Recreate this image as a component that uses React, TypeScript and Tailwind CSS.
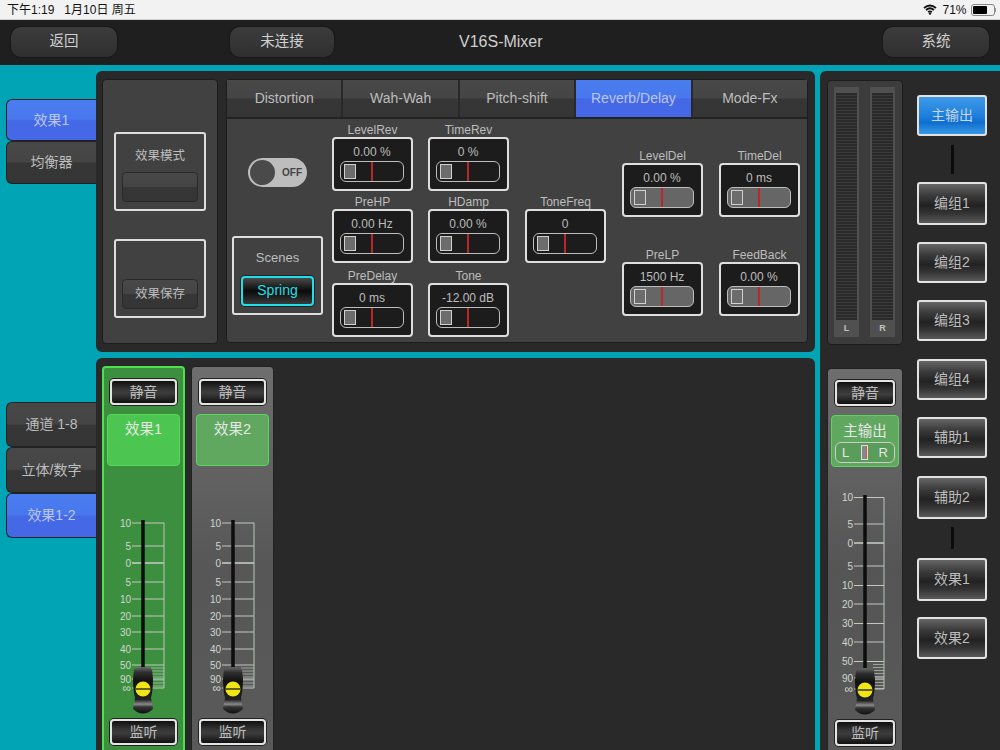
import React from 'react';

const FONT = '"Liberation Sans", "Noto Sans CJK SC", sans-serif';

const gloss = 'bg-[linear-gradient(#484848_0%,#454545_48%,#363636_52%,#353535_100%)]';
const blueGloss = 'bg-[linear-gradient(#4a7def_0%,#4877ee_48%,#4468e6_52%,#4468e6_100%)]';
const darkBtn = 'bg-[linear-gradient(#0f0f0f_0%,#333_35%,#3d3d3d_55%,#111_100%)]';
const sideBtn = 'bg-[linear-gradient(#666_0%,#3a3a3a_30%,#222_55%,#333_75%,#5a5a5a_100%)]';

function SideTab({ label, active, h }: { label: string; active?: boolean; h: number }) {
  return (
    <div
      style={{ height: h }}
      className={`flex items-center justify-center rounded-l-[6px] border border-r-0 border-[#222] text-[14px] ${active ? blueGloss + ' text-[#bcc6ee]' : gloss + ' text-[#bdbdbd]'}`}
    >
      {label}
    </div>
  );
}

function TopButton({ label, w }: { label: string; w: number }) {
  return (
    <div
      style={{ width: w }}
      className="flex h-[30px] items-center justify-center rounded-[10px] bg-[linear-gradient(#3c3c3c,#2f2f2f)] text-[14.5px] text-[#cfcfcf] ring-1 ring-[#191919]"
    >
      {label}
    </div>
  );
}

function Param({ label, value, light, mt = 0 }: { label: string; value: string; light?: boolean; mt?: number }) {
  return (
    <div style={{ marginTop: mt }} className="w-[81px]">
      <div className="h-[13px] text-center text-[12px] leading-[13px] text-[#bdbdbd]">{label}</div>
      <div className="h-[54px] rounded-[4px] border-2 border-[#dedede] bg-[#1c1c1c] pl-[6px] pr-[7px] pt-[5px]">
        <div className="h-[16px] text-center text-[12px] leading-[16px] text-[#bdbdbd]">{value}</div>
        <div className={`relative mt-[1px] h-[21px] rounded-[6px] border-[1.5px] border-[#bdbdbd] py-[1.5px] pl-[3px] ${light ? 'bg-[#666]' : 'bg-[#1c1c1c]'}`}>
          <div className="h-[15px] w-[12px] border border-[#d0d0d0] bg-[#6c6c6c]" />
          <div className="absolute left-[30px] top-0 h-full w-[2px] bg-[#b82828]" />
        </div>
      </div>
    </div>
  );
}

function MixButton({ label, w }: { label: string; w: number }) {
  return (
    <div
      style={{ width: w }}
      className={`flex h-[26px] items-center justify-center rounded-[4px] border-2 border-[#e4e4e4] text-[14px] text-[#bdbdbd] ring-1 ring-[#222] ${darkBtn}`}
    >
      {label}
    </div>
  );
}

function RouteButton({ label, mt, h = 41 }: { label: string; mt: number; h?: number }) {
  return (
    <div
      style={{ height: h, marginTop: mt }}
      className={`flex w-[70px] items-center justify-center rounded-[3px] border-2 border-[#e2e2e2] text-[14px] text-[#bdbdbd] ${sideBtn}`}
    >
      {label}
    </div>
  );
}

function Fader({ id, width, height, track, right, top, knobTop, ticks }: { id: string; width: number; height: number; track: number; right: number; top: number; knobTop: number; ticks: [string, number][] }) {
  const bottom = ticks[ticks.length - 1][1];
  const fifty = ticks[ticks.length - 3][1];
  const fine: number[] = [];
  for (let y = fifty + 3; y < bottom; y += 3) fine.push(y);
  return (
    <svg width={width} height={height} className="block">
      <defs>
        <linearGradient id={id} x1="0" y1="0" x2="0" y2="1">
          <stop offset="0" stopColor="#6a6a6a" />
          <stop offset="0.12" stopColor="#2e2e2e" />
          <stop offset="0.3" stopColor="#111" />
          <stop offset="0.7" stopColor="#222" />
          <stop offset="0.8" stopColor="#8a8a8a" />
          <stop offset="0.86" stopColor="#333" />
          <stop offset="1" stopColor="#111" />
        </linearGradient>
      </defs>
      <line x1={right} y1={ticks[0][1]} x2={right} y2={bottom} stroke="#b9c4b9" strokeWidth="1" />
      {fine.map((y) => (
        <line key={y} x1={track + 8} y1={y} x2={right} y2={y} stroke="#b9c4b9" strokeWidth="0.7" />
      ))}
      {ticks.map(([t, y], i) => (
        <g key={i}>
          <line x1={track - 11} y1={y} x2={right} y2={y} stroke="#c0c8c0" strokeWidth={t === '0' ? 1.6 : 1} />
          <text x={track - 12} y={y + 3.5} textAnchor="end" fontSize={t === '∞' ? 12 : 10} fill="#cfd6cf" fontFamily={FONT}>{t}</text>
        </g>
      ))}
      <rect x={track - 1.75} y={top} width="3.5" height={knobTop - top + 4} fill="#0d0d0d" />
      <path
        d={`M${track - 9},${knobTop + 2} Q${track},${knobTop - 2} ${track + 9},${knobTop + 2} L${track + 10},${knobTop + 12} Q${track + 10},${knobTop + 23} ${track + 8},${knobTop + 31} L${track + 10},${knobTop + 42} Q${track},${knobTop + 51} ${track - 10},${knobTop + 42} L${track - 8},${knobTop + 31} Q${track - 10},${knobTop + 23} ${track - 10},${knobTop + 12} Z`}
        fill={`url(#${id})`}
      />
      <circle cx={track} cy={knobTop + 22} r="7.5" fill="#f0e616" />
      <line x1={track - 7.5} y1={knobTop + 22} x2={track + 7.5} y2={knobTop + 22} stroke="#1a1a1a" strokeWidth="1.3" />
    </svg>
  );
}

const stripTicks: [string, number][] = [['10', 8], ['5', 31], ['0', 48], ['5', 67], ['10', 84], ['20', 101], ['30', 117], ['40', 134], ['50', 150], ['90', 164], ['∞', 173]];
const masterTicks: [string, number][] = [['10', 7.5], ['5', 34], ['0', 53], ['5', 76], ['10', 95.5], ['20', 114], ['30', 133.5], ['40', 152], ['50', 171.5], ['90', 188], ['∞', 199]];

function Strip({ name, selected, id }: { name: string; selected?: boolean; id: string }) {
  return (
    <div className={`flex h-[400px] w-[83px] flex-col items-center rounded-[4px] border ${selected ? 'border-2 border-[#4fe050] bg-[#3d8f40] pt-[11px]' : 'border-[#222] bg-[linear-gradient(#6e6e6e,#575757_50%,#5a5a5a)] pt-[12px]'}`}>
      <MixButton label="静音" w={67} />
      <div className={`mt-[9px] h-[52px] w-[73px] rounded-[4px] border border-[#58d85a] pt-[4px] text-center text-[14.5px] text-[#e6e6e6] ${selected ? 'bg-[#4cc650]' : 'bg-[#60a860]'}`}>
        {name}
      </div>
      <div className="mt-[49px] self-start">
        <Fader id={id} width={79} height={204} track={selected ? 39 : 41} right={selected ? 60 : 62} top={5} knobTop={152} ticks={stripTicks} />
      </div>
      <MixButton label="监听" w={67} />
    </div>
  );
}

export default function App() {
  return (
    <div className="flex h-[750px] w-[1000px] flex-col overflow-hidden" style={{ fontFamily: FONT }}>
      {/* status bar */}
      <div className="flex h-[20px] items-center border-b border-[#cfcfcf] bg-[#f2f2f2] pl-[7px] pr-[4px] text-[12px] text-[#111]">
        <span>下午1:19</span>
        <span className="ml-[10px]">1月10日 周五</span>
        <svg width="14" height="11" viewBox="0 0 14 11" className="ml-auto">
          <path d="M1,4 Q7,-1 13,4 M3,6 Q7,2.5 11,6 M5,8 Q7,6.5 9,8" fill="none" stroke="#111" strokeWidth="1.7" />
          <circle cx="7" cy="9.5" r="1.2" fill="#111" />
        </svg>
        <span className="ml-[5px]">71%</span>
        <div className="ml-[4px] flex h-[12px] w-[24px] items-center rounded-[3px] border border-[#888] p-[1px]">
          <div className="h-full w-[71%] rounded-[1px] bg-black" />
        </div>
        <div className="h-[4px] w-[1.5px] bg-[#999]" />
      </div>

      {/* top bar */}
      <div className="flex h-[45px] items-center bg-[#1f1f1f] pb-[2px] pl-[11px] pr-[11px]">
        <TopButton label="返回" w={106} />
        <div className="ml-[113px]">
          <TopButton label="未连接" w={104} />
        </div>
        <div className="ml-[125px] w-[82px] whitespace-nowrap text-[16px] text-[#cfcfcf]">V16S-Mixer</div>
        <div className="ml-auto">
          <TopButton label="系统" w={106} />
        </div>
      </div>

      <div className="flex flex-1 overflow-hidden bg-[#00a4b4]">
        {/* left tabs */}
        <div className="w-[96px] pl-[6px] pt-[34px]">
          <SideTab label="效果1" active h={42} />
          <SideTab label="均衡器" h={43} />
          <div className="h-[218px]" />
          <SideTab label="通道 1-8" h={45} />
          <SideTab label="立体/数字" h={46} />
          <SideTab label="效果1-2" active h={45} />
        </div>

        {/* centre */}
        <div className="w-[719px] pt-[6px]">
          <div className="flex h-[281px] gap-[8px] rounded-[6px] bg-[#292929] pl-[6px] pt-[8px]">
            <div className="h-[265px] w-[116px] rounded-[4px] border border-[#1c1c1c] bg-[#414141] px-[11px] pt-[52px]">
              <div className="h-[79px] rounded-[3px] border-2 border-[#dedede] px-[6px] pt-[12px] text-center text-[12.5px] leading-[21px] text-[#bdbdbd]">
                效果模式
                <div className={`mt-[5px] h-[30px] rounded-[4px] border border-[#2a2a2a] ${gloss}`} />
              </div>
              <div className="mt-[28px] flex h-[79px] items-end rounded-[3px] border-2 border-[#dedede] px-[6px] pb-[7px]">
                <div className={`flex h-[30px] w-full items-center justify-center rounded-[4px] border border-[#2a2a2a] text-[12.5px] text-[#bdbdbd] ${gloss}`}>效果保存</div>
              </div>
            </div>

            <div className="h-[264px] w-[582px] rounded-[4px] border border-[#1c1c1c] bg-[#414141]">
              <div className="flex h-[37px] gap-[2px] bg-[#292929]">
                {['Distortion', 'Wah-Wah', 'Pitch-shift', 'Reverb/Delay', 'Mode-Fx'].map((t) => (
                  <div key={t} className={`flex flex-1 items-center justify-center text-[14px] ${t === 'Reverb/Delay' ? blueGloss + ' text-[#bcc6ee]' : gloss + ' text-[#bdbdbd]'}`}>
                    {t}
                  </div>
                ))}
              </div>
              <div className="flex border-t-2 border-[#222] pl-[5px]">
                <div className="w-[91px] pt-[39px]">
                  <div className="ml-[16px] flex h-[29px] w-[59px] items-center rounded-full bg-[#bdbdbd] pl-[2px]">
                    <div className="h-[25px] w-[25px] rounded-full bg-[#4a4a4a]" />
                    <span className="ml-[7px] text-[10px] font-bold text-[#444]">OFF</span>
                  </div>
                  <div className="mt-[49px] flex h-[79px] flex-col items-center rounded-[3px] border-2 border-[#dedede] pt-[10px] text-[13px] text-[#bdbdbd]">
                    Scenes
                    <div className="mt-[8px] flex h-[30px] w-[73px] items-center justify-center rounded-[4px] border-2 border-[#1fe0ea] bg-[linear-gradient(#4a4a4a,#0a0a0a_50%,#3a3a3a)] text-[14px] text-[#1fe0ea] ring-1 ring-[#222]">
                      Spring
                    </div>
                  </div>
                </div>
                <div className="ml-[9px] pt-[5px]">
                  <Param label="LevelRev" value="0.00 %" />
                  <Param label="PreHP" value="0.00 Hz" mt={5} />
                  <Param label="PreDelay" value="0 ms" mt={7} />
                </div>
                <div className="ml-[15px] pt-[5px]">
                  <Param label="TimeRev" value="0 %" />
                  <Param label="HDamp" value="0.00 %" mt={5} />
                  <Param label="Tone" value="-12.00 dB" mt={7} />
                </div>
                <div className="ml-[16px] pt-[77px]">
                  <Param label="ToneFreq" value="0" />
                </div>
                <div className="ml-[16px] pt-[31px]">
                  <Param label="LevelDel" value="0.00 %" light />
                  <Param label="PreLP" value="1500 Hz" light mt={32} />
                </div>
                <div className="ml-[16px] pt-[31px]">
                  <Param label="TimeDel" value="0 ms" light />
                  <Param label="FeedBack" value="0.00 %" light mt={32} />
                </div>
              </div>
            </div>
          </div>

          <div className="mt-[6px] flex h-[400px] gap-[6px] rounded-[6px] bg-[#292929] pl-[6px] pt-[8px]">
            <Strip name="效果1" selected id="knob-a" />
            <Strip name="效果2" id="knob-b" />
          </div>
        </div>

        {/* right */}
        <div className="ml-[5px] mt-[6px] flex w-[180px] rounded-tl-[6px] bg-[#292929] pl-[7px]">
          <div className="w-[76px] pt-[9px]">
            <div className="flex h-[265px] justify-between rounded-[4px] border border-[#1c1c1c] bg-[#3c3c3c] pl-[6px] pr-[7px] pt-[6px]">
              {['L', 'R'].map((c) => (
                <div key={c} className="flex h-[250px] w-[25px] flex-col items-center bg-[#505050] px-[2px] pt-[6px]">
                  <div className="h-[227px] w-full bg-[repeating-linear-gradient(#2a2a2a_0px,#2a2a2a_2px,#3a3a3a_2px,#3a3a3a_3px)]" />
                  <span className="mt-[2px] text-[9px] font-bold text-[#c0c0c0]">{c}</span>
                </div>
              ))}
            </div>
            <div className="mt-[23px] flex h-[400px] w-[76px] flex-col items-center rounded-[4px] border border-[#222] bg-[linear-gradient(#6e6e6e,#555_50%,#5a5a5a)] pt-[11px]">
              <MixButton label="静音" w={60} />
              <div className="mt-[9px] flex h-[52px] w-[68px] flex-col items-center rounded-[4px] border border-[#58d85a] bg-[#60a860] pt-[4px] text-[14.5px] leading-[22px] text-[#e6e6e6]">
                主输出
                <div className="relative flex h-[21px] w-[60px] shrink-0 items-center justify-between rounded-[6px] border border-[#ccc] bg-[#5a9c5a] px-[6px] text-[13px]">
                  <span>L</span>
                  <div className="absolute left-[25px] top-[2px] h-[15px] w-[7px] border border-[#ddd] bg-[#888]">
                    <div className="ml-auto h-full w-[1px] bg-[#e05050]" />
                  </div>
                  <span>R</span>
                </div>
              </div>
              <div className="mt-[23px] self-start">
                <Fader id="knob-m" width={74} height={230} track={37} right={56} top={5} knobTop={178} ticks={masterTicks} />
              </div>
              <MixButton label="监听" w={60} />
            </div>
          </div>
          <div className="ml-[14px] w-[70px]">
            <div className="mt-[24px] flex h-[41px] w-[70px] items-center justify-center rounded-[3px] border-2 border-[#e2e2e2] bg-[linear-gradient(#3f9ae8,#1f7fdc_50%,#0f6fd0_70%,#3a9ae6)] text-[14px] text-[#c8d6e6]">主输出</div>
            <div className="mx-auto mt-[9px] h-[29px] w-[3px] bg-[#0c0c0c]" />
            <RouteButton label="编组1" mt={8} h={43} />
            <RouteButton label="编组2" mt={17} />
            <RouteButton label="编组3" mt={17} />
            <RouteButton label="编组4" mt={18} />
            <RouteButton label="辅助1" mt={17} />
            <RouteButton label="辅助2" mt={18} h={43} />
            <div className="mx-auto mt-[8px] h-[22px] w-[3px] bg-[#0c0c0c]" />
            <RouteButton label="效果1" mt={9} h={43} />
            <RouteButton label="效果2" mt={16} h={42} />
          </div>
        </div>
      </div>
    </div>
  );
}
